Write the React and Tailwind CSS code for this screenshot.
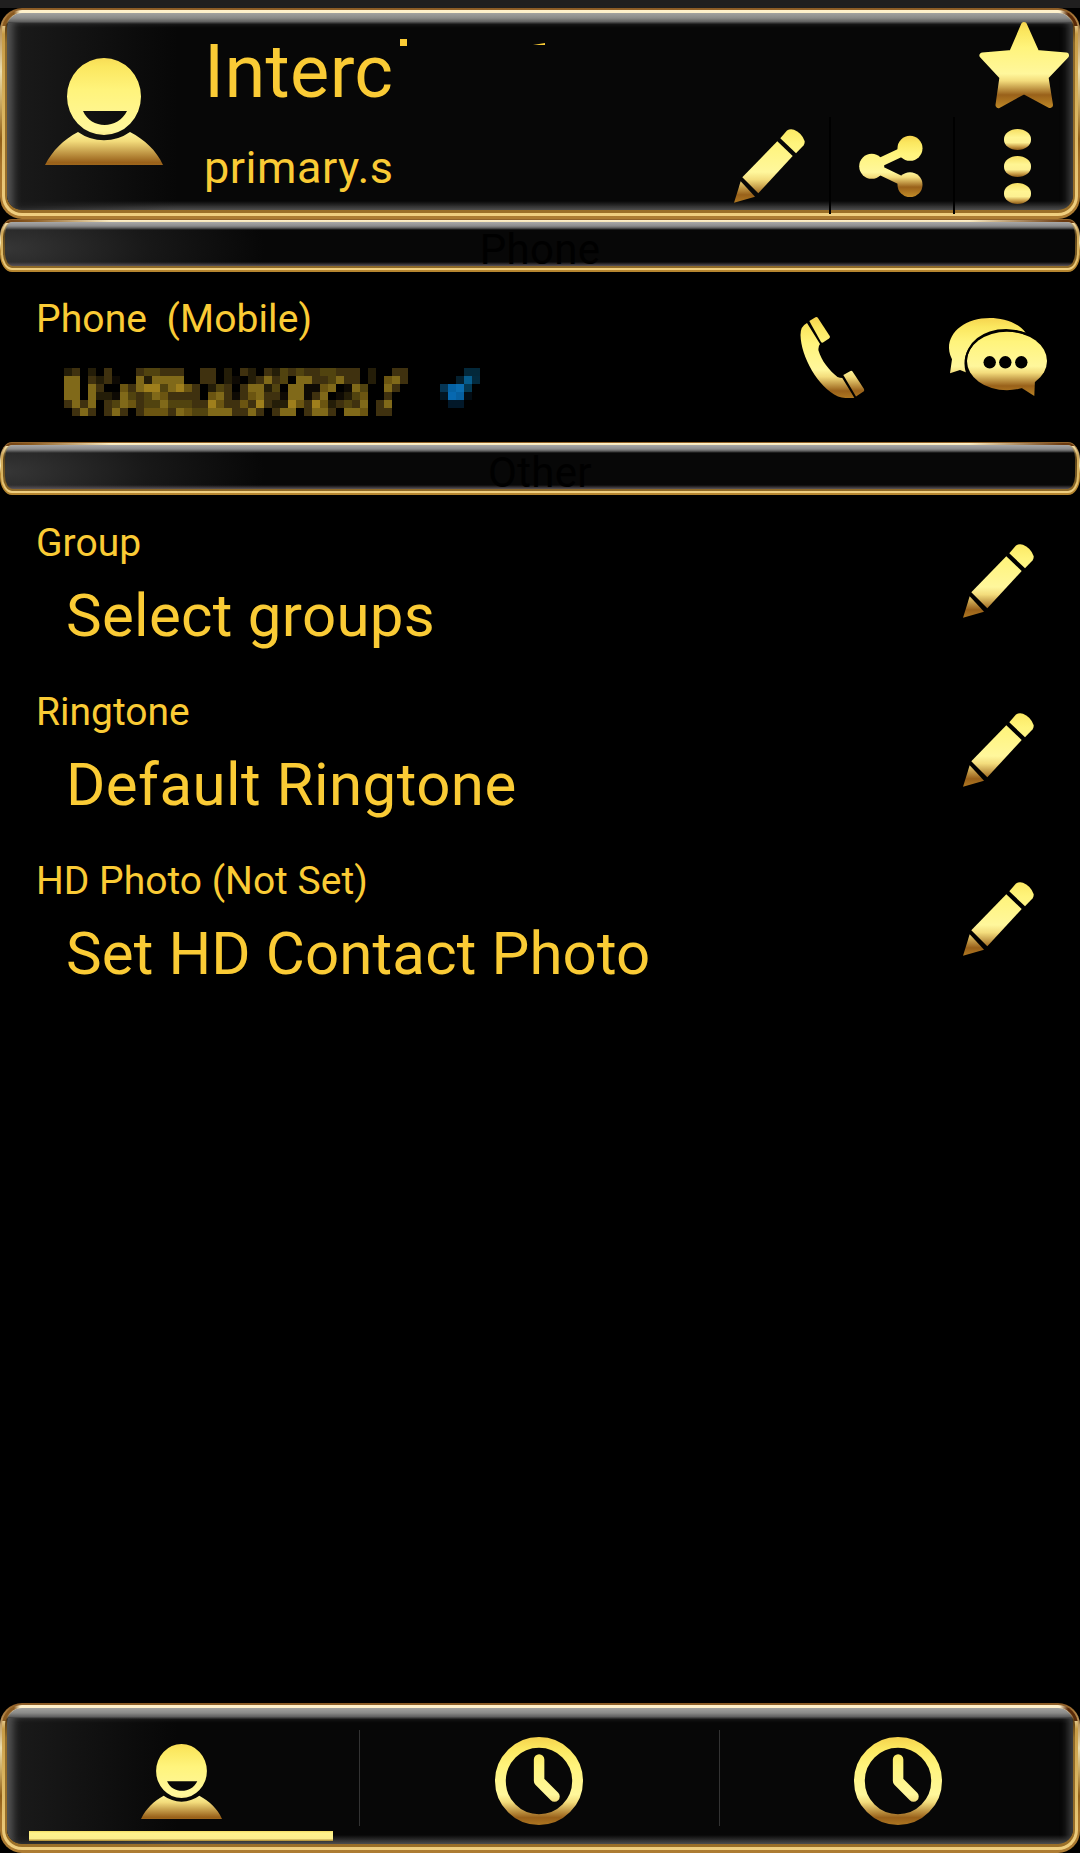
import React from "react";

// gold fill shared by every icon
const GoldGradient = ({ id, y1 = 0, y2 }) => (
  <linearGradient id={id} gradientUnits="userSpaceOnUse" x1="0" x2="0" y1={y1} y2={y2}>
    <stop offset="0" stopColor="#f5d24d" />
    <stop offset="0.12" stopColor="#fbe75f" />
    <stop offset="0.3" stopColor="#fff47c" />
    <stop offset="0.6" stopColor="#fff79c" />
    <stop offset="0.68" stopColor="#f3dc7c" />
    <stop offset="0.84" stopColor="#99611a" />
    <stop offset="1" stopColor="#c28c28" />
  </linearGradient>
);

const PersonIcon = ({ id, className }) => (
  <svg viewBox="0 0 118 107" preserveAspectRatio="none" className={className}>
    <GoldGradient id={id} y1={-8} y2={126} />
    <g fill={`url(#${id})`}>
      <path
        fillRule="evenodd"
        d="M59 0a37 38.500 0 0 1 0 77a37 38.500 0 0 1 0-77zM38 53C46 71.500 73 71.500 82 53z"
      />
      <path d="M0 107C8 92 18 82 33 74A45 45 0 0 0 85 74C100 82 111 92 118 107z" />
    </g>
  </svg>
);

const StarIcon = () => (
  <svg viewBox="0 0 91 88" className="w-[91px] h-[88px]">
    <GoldGradient id="star" y2={88} />
    <path
      fill="url(#star)"
      stroke="url(#star)"
      strokeWidth="6"
      strokeLinejoin="round"
      d="M45 4L57.500 32L87 34.500L66.500 56L71 84L45 70L19.500 84L23.500 56L3.500 34.500L33 32z"
    />
  </svg>
);

const PencilIcon = ({ id, className }) => (
  <svg viewBox="0 0 71 74" className={`w-[71px] h-[74px] shrink-0 ${className}`}>
    <GoldGradient id={id} y1={-14} y2={81} />
    <g fill={`url(#${id})`}>
      <path d="M46.300 9.300L53 1.500Q56 -0.500 60 0.700Q68 4 70.600 12Q71 14.500 69.500 16.500L62 24.300z" />
      <path d="M43.300 12.300L58.700 27L24.300 64.300L8.300 48.300z" />
      <path d="M6.700 52.300L21 67.700L0 73.700z" />
    </g>
  </svg>
);

const ShareIcon = () => (
  <svg viewBox="0 0 64 62" className="w-[64px] h-[62px]">
    <GoldGradient id="share" y2={62} />
    <path d="M51 13.300L12.700 31.300L51 49.700" fill="none" stroke="url(#share)" strokeWidth="9" />
    <g fill="url(#share)">
      <circle cx="12.700" cy="31.300" r="12.500" />
      <circle cx="51" cy="13.300" r="12.500" />
      <circle cx="51" cy="49.700" r="12.500" />
    </g>
  </svg>
);

const PhoneIcon = () => (
  <svg viewBox="0 0 65 81" className="w-[65px] h-[81px]">
    <GoldGradient id="phone" y2={88} />
    <g fill="url(#phone)">
      <path d="M9.300 4L15.500 0.300Q17 -0.300 17.800 0.800L29.700 19Q30.400 20.500 29 21.500L23 25.500Q21.800 26 21 25z" />
      <path d="M7 6Q0.500 9 0.500 18C1 40 18 70 38 79.500Q46 82 54.300 80.700L42.300 61Q40 61 37.500 60C29 53 21.500 44 18.500 33.500Q18 29.500 20 27z" />
      <path d="M43.300 58L50.500 54Q51.800 53.500 52.700 54.700L64 72Q64.700 73.500 63.500 74.500L56 79.500z" />
    </g>
  </svg>
);

const ChatIcon = () => (
  <svg viewBox="0 0 100 80" className="w-[100px] h-[80px]">
    <GoldGradient id="chat" y2={82} />
    <g fill="url(#chat)">
      <path d="M77.700 15.700C70 5 54 1 42 1C18 1 1 14 1 31C1 36 3 40 4 42.300L2 56.300L12 53L19 55.700C17 52 17 48 17 45C17 27 36 13 59 13C66 13 72 14 77.700 15.700z" />
      <ellipse cx="59" cy="44" rx="40" ry="29.200" />
      <path d="M73.700 71L86.300 79L87 62z" />
    </g>
    {/* keeps the two bubbles apart */}
    <path
      d="M19 56C14 40 22 22 42 15.500C54 11.800 68 12.500 78 17"
      fill="none"
      stroke="#000"
      strokeWidth="2"
    />
    <g fill="#000">
      <circle cx="41.700" cy="45.300" r="6.200" />
      <circle cx="57.300" cy="45.300" r="6.200" />
      <circle cx="73.300" cy="45.300" r="6.200" />
    </g>
  </svg>
);

const ClockIcon = ({ id }) => (
  <svg viewBox="0 0 88 88" className="w-[88px] h-[88px]">
    <GoldGradient id={id} y2={96} />
    <g fill="none" stroke={`url(#${id})`}>
      <circle cx="44" cy="44" r="38.600" strokeWidth="10.800" />
      <path
        d="M44.100 22.500V44L59.500 59.500"
        strokeWidth="10.500"
        strokeLinecap="round"
        strokeLinejoin="round"
      />
    </g>
  </svg>
);

const MenuDots = () => (
  <div className="flex flex-col gap-[6px]">
    {[0, 1, 2].map((dot) => (
      <span
        key={dot}
        className="block w-[27px] h-[21px] rounded-[50%/48%] bg-[linear-gradient(#f6df62,#fff593_40%,#fdf092_65%,#c79a45_85%,#8a5a17)]"
      />
    ))}
  </div>
);

// the number is pixelated, one character per 8px block
const numberBlocks = [
  "ab.a.b...bccbbb..bb.a.ba.bacbcbbccbbb.a..bb",
  "ee.babv..eaeeee..bb.av.abebc.eebbcebb.a.deb",
  "ee.eb..dbeffcefdb.acb.beeac.eevvde.vec..eb.",
  "ee.eaavecbcedbbbb.debvbdebbveevbe.vacd..b..",
  "bebe.bcedbccecccbbfdbbdbfbaafdbfdabcbe.be..",
  ".beb.beb.bdddbedcceeebbeb.bee.beeb.eed.bb..",
];
const blockColors = {
  v: "#0e0a04",
  a: "#241d08",
  b: "#3f310f",
  c: "#51430f",
  d: "#6b5511",
  e: "#806919",
  f: "#9f7f1c",
};
const checkBlocks = [
  [3, 0, "#03283a"],
  [4, 0, "#03283a"],
  [2, 1, "#04202f"],
  [3, 1, "#065c8c"],
  [4, 1, "#032a3e"],
  [0, 2, "#053554"],
  [1, 2, "#0562a4"],
  [2, 2, "#0a6cb0"],
  [3, 2, "#043852"],
  [0, 3, "#021522"],
  [1, 3, "#0668b0"],
  [2, 3, "#065fa0"],
  [3, 3, "#020c14"],
  [1, 4, "#021829"],
  [2, 4, "#021829"],
];

const HiddenNumber = () => (
  <svg viewBox="0 0 416 48" shapeRendering="crispEdges" className="w-[416px] h-[48px]">
    {numberBlocks.map((row, y) =>
      [...row].map((c, x) =>
        c === "." ? null : (
          <rect key={`${x}-${y}`} x={x * 8} y={y * 8} width="8" height="8" fill={blockColors[c]} />
        )
      )
    )}
    {checkBlocks.map(([x, y, fill]) => (
      <rect key={`c${x}-${y}`} x={(x + 47) * 8} y={y * 8} width="8" height="8" fill={fill} />
    ))}
  </svg>
);

// large glossy panel used by the header and the tab bar
const GoldPanel = ({ className, children }) => (
  <div
    className={`flex rounded-[22px] p-[2px] pb-[3px] bg-[linear-gradient(#8a5a24_0,#a8783a_8px,#e9dcae_30%,#c9a860_45%,#8f5f1a_62%,#a8752c_75%,#ad7c33)] ${className}`}
  >
    <div className="flex flex-1 rounded-[20px] p-[3px] bg-[linear-gradient(90deg,#8a5a20_0,#8a5a20_12px,#fff1cb00_18px,#fff1cb00_calc(100%-18px),#5a2a08_calc(100%-10px)),linear-gradient(#fff1cb_0,#fff1cb_8px,#c79b45_24px,#d9b45f_50%,#f0cf80)] bg-[length:100%_16px,100%_100%] bg-no-repeat">
      <div className="flex flex-1 rounded-[17px] p-[2px] pb-[3px] pt-0 bg-[linear-gradient(#fff1cb_0,#5a3a10_12px,#8f6a28_30px,#9b6f28)]">
        <div className="flex flex-1 rounded-[15px] bg-[linear-gradient(#a2a29f_0,#8a8a88_5px,#5c5c5c_9px,#070707_11px,#070707_calc(100%-9px),#4c4c4c)] overflow-hidden">
          <div className="flex flex-1 mt-[10px] shadow-[inset_9px_0_8px_-3px_#575757,inset_-9px_0_8px_-5px_#474747] bg-[linear-gradient(90deg,#1b1b1b,#07070700_170px)]">
            {children}
          </div>
        </div>
      </div>
    </div>
  </div>
);

const SectionBar = ({ title }) => (
  <div className="flex h-[53px] rounded-[12px/18px] p-[1px] pb-[2px] bg-[linear-gradient(#8f6028,#f5e6b0_45%,#b98a36_60%,#b5852f)]">
    <div className="flex flex-1 rounded-[11px/17px] p-[2px] bg-[linear-gradient(90deg,#6b3a10_0,#8a5a20_30px,#fff1cb00_110px,#fff1cb00_calc(100%-110px),#6b3a10_calc(100%-16px)),linear-gradient(#fff1cb_0,#f0dca6_4px,#d0a858_12px,#d9b45f_60%,#f0cf80)] bg-[length:100%_3px,100%_100%] bg-no-repeat">
      <div className="flex flex-1 rounded-[9px/15px] px-[2px] pb-[2px] bg-[linear-gradient(#c8b890,#5a4218_12px,#8f6a28)]">
        <div className="flex-1 rounded-[8px/13px] bg-[linear-gradient(#a8a8a8_0,#8c8c8c_4px,#5c5c5c_6px,#07070700_8px,#07070700_calc(100%-4px),#5a5358),radial-gradient(260px_90px_at_0_60%,#363636,#181818_55%,#070707)] text-center">
          <span className="block pt-[13px] text-[42px] leading-[30px] tracking-[0.3px] text-black">
            {title}
          </span>
        </div>
      </div>
    </div>
  </div>
);

const options = [
  { id: "group", label: "Group", value: "Select groups", spacing: "tracking-[0.3px]" },
  { id: "ringtone", label: "Ringtone", value: "Default Ringtone", spacing: "tracking-[0.45px]" },
  {
    id: "photo",
    label: "HD Photo (Not Set)",
    value: "Set HD Contact Photo",
    spacing: "tracking-[0.12px]",
  },
];

const OptionRow = ({ id, label, value, spacing }) => (
  <div className="flex justify-between h-[169px] pt-[25px] pl-[36px] pr-[46px]">
    <div>
      <p className="text-[39px] leading-[44px]">{label}</p>
      <p className={`mt-4 pl-[30px] text-[60px] leading-[70px] ${spacing}`}>{value}</p>
    </div>
    <PencilIcon id={`pencil-${id}`} className="mt-[23px]" />
  </div>
);

const Header = () => (
  <header className="relative flex h-[211px]">
    <GoldPanel className="flex-1">
      <PersonIcon id="avatar" className="w-[118px] h-[107px] ml-[38px] mt-[35px]" />
      <div className="ml-[41px] mt-[7px]">
        <div className="flex">
          <p className="text-[74px] leading-[84px] tracking-[0.3px]">Interc</p>
          {/* leftovers of the erased letters */}
          <span className="block ml-[7px] mt-[9px] w-[7px] h-[7px] bg-[#facb35]" />
          <svg viewBox="0 0 12 2" className="ml-[126px] mt-[13px] w-[12px] h-[2px]">
            <path d="M0 2L12 0V2z" fill="#facb35" />
          </svg>
        </div>
        <p className="mt-[28px] text-[45px] leading-[52px] tracking-[0.5px]">primary.s</p>
      </div>
    </GoldPanel>
    {/* action buttons overlap the frame of the panel */}
    <div className="absolute right-0 bottom-[5px] flex items-start h-[97px]">
      <PencilIcon id="pencil-edit" className="mt-[12px] mr-[24px]" />
      <span className="w-[2px] h-full bg-black" />
      <div className="w-[122px] pl-[28px] pt-[18px]">
        <ShareIcon />
      </div>
      <span className="w-[2px] h-full bg-black" />
      <div className="w-[125px] pl-[49px] pt-[12px]">
        <MenuDots />
      </div>
    </div>
    <div className="absolute right-[10px] top-[13px]">
      <StarIcon />
    </div>
  </header>
);

const TabBar = () => (
  <nav className="relative flex h-[150px]">
    <GoldPanel className="flex-1" />
    <div className="absolute inset-0 grid grid-cols-3">
      <div className="flex justify-center border-r border-[#333] h-[96px] mt-[27px] pt-[14px]">
        <PersonIcon id="tab-person" className="w-[81px] h-[75px] ml-[4px]" />
      </div>
      <div className="flex justify-center border-r border-[#333] h-[96px] mt-[27px] pt-[7px] pr-[2px]">
        <ClockIcon id="tab-clock" />
      </div>
      <div className="flex justify-center mt-[27px] pt-[7px] pr-[4px]">
        <ClockIcon id="tab-recent" />
      </div>
    </div>
    <span className="absolute left-[29px] bottom-[12px] w-[304px] h-[10px] bg-[linear-gradient(#f3dc62,#fff38c_20%,#fcee8c_75%,#a8842e)]" />
  </nav>
);

const App = () => {
  return (
    <div className="flex flex-col w-[1080px] h-[1853px] overflow-hidden bg-black text-[#facb35] font-[Roboto,sans-serif]">
      <div className="h-[8px] shrink-0 bg-[#201f1f]" />
      <Header />
      <SectionBar title="Phone" />
      <div className="flex justify-between h-[170px] pt-[25px] pl-[36px]">
        <div>
          <p className="text-[39px] leading-[44px] tracking-[0.1px] whitespace-pre">
            {"Phone  (Mobile)"}
          </p>
          <div className="ml-[28px] mt-[27px]">
            <HiddenNumber />
          </div>
        </div>
        <div className="flex items-start gap-[83px] pr-[32px] pt-[20px]">
          <PhoneIcon />
          <ChatIcon />
        </div>
      </div>
      <SectionBar title="Other" />
      <main className="flex-1 pt-px">
        {options.map((option) => (
          <OptionRow key={option.id} {...option} />
        ))}
      </main>
      <TabBar />
    </div>
  );
};

export default App;
